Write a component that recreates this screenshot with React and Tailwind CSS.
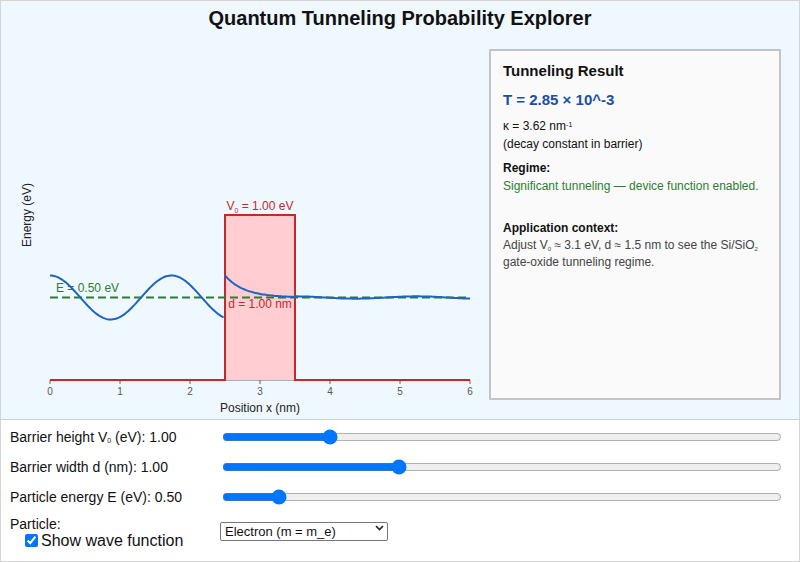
import { useState } from "react";

// physics constants in nm^-1 for E, V in eV (electron)
const K0 = 5.123;

function wavePath(E, V0, d, a, show) {
  const k = K0 * Math.sqrt(E);
  const kappa = K0 * Math.sqrt(Math.max(V0 - E, 0.0001));
  const T = 2.85e-3;
  const px = (x) => 50 + x * 70;
  const yE = 380 - E * 165;
  const amp = 22;
  const pts = [];
  const b = a + d;
  for (let x = 0; x <= 6.0001; x += 0.02) {
    let y;
    if (x < a) y = yE - amp * Math.cos(k * x);
    else if (x <= b) y = yE - amp * Math.exp(-kappa * (x - a));
    else y = yE - amp * Math.sqrt(T) * Math.cos(k * (x - b));
    pts.push([px(x), y]);
  }
  // break at the barrier edge like the original plot
  let dStr = "";
  let prevRegion = null;
  for (const [i, [x, y]] of pts.entries()) {
    const xn = (x - 50) / 70;
    const region = xn < a ? 0 : xn <= b ? 1 : 2;
    const cmd = i === 0 || (region === 1 && prevRegion === 0) ? "M" : "L";
    dStr += `${cmd}${x.toFixed(1)},${y.toFixed(1)} `;
    prevRegion = region;
  }
  return show ? dStr : "";
}

function Chart({ V0, d, E, show }) {
  const a = 2.5;
  const x0 = 50 + a * 70;
  const x1 = 50 + (a + d) * 70;
  const yTop = 380 - V0 * 165;
  const yE = 380 - E * 165;
  return (
    <svg width="480" height="382" viewBox="1 37 480 382" className="block shrink-0">
      <text x="28" y="215" transform="rotate(-90 28 215)" textAnchor="middle" dominantBaseline="middle" fontSize="12" fill="#222">
        Energy (eV)
      </text>
      <line x1="50" y1="380" x2="470" y2="380" stroke="#666" strokeWidth="1" />
      {[0, 1, 2, 3, 4, 5, 6].map((t) => (
        <g key={t}>
          <line x1={50 + t * 70} y1="380" x2={50 + t * 70} y2="384" stroke="#666" strokeWidth="1" />
          <text x={50 + t * 70} y="394.5" textAnchor="middle" fontSize="10" fill="#555">
            {t}
          </text>
        </g>
      ))}
      <text x="260" y="411.5" textAnchor="middle" fontSize="12" fill="#222">
        Position x (nm)
      </text>
      <rect x={x0} y={yTop} width={x1 - x0} height={380 - yTop} fill="#ffcdd2" />
      <polyline
        points={`50,380 ${x0},380 ${x0},${yTop} ${x1},${yTop} ${x1},380 470,380`}
        fill="none"
        stroke="#c62828"
        strokeWidth="2"
      />
      <text x={(x0 + x1) / 2} y={yTop - 5} textAnchor="middle" fontSize="12" fill="#c62828">
        V<tspan fontSize="7" dy="3">0</tspan>
        <tspan dy="-3"> = {V0.toFixed(2)} eV</tspan>
      </text>
      <text x={(x0 + x1) / 2} y={yE + 10} textAnchor="middle" fontSize="12" fill="#c62828">
        d = {d.toFixed(2)} nm
      </text>
      <line x1="50" y1={yE} x2="470" y2={yE} stroke="#2e7d32" strokeWidth="2" strokeDasharray="8 4" />
      <text x="56" y={yE - 6} fontSize="12" fill="#2e7d32">
        E = {E.toFixed(2)} eV
      </text>
      <path d={wavePath(E, V0, d, a, show)} fill="none" stroke="#1e64c0" strokeWidth="2" />
    </svg>
  );
}

function ResultBox() {
  return (
    <div className="mt-3 ml-2 w-[292px] h-[351px] border-2 border-[#c4c4c4] bg-[#fafafa] px-3 pt-[11px] text-[12px] text-[#111]">
      <div className="text-[15px] leading-[18px] font-bold">Tunneling Result</div>
      <div className="mt-[10px] text-[15px] leading-[20px] font-bold text-[#1a4fa6]">T = 2.85 × 10^-3</div>
      <div className="mt-[7px] leading-[18px]">
        κ = 3.62 nm<sup className="text-[7px]">-1</sup>
      </div>
      <div className="leading-[18px]">(decay constant in barrier)</div>
      <div className="mt-[6px] leading-[18px] font-bold">Regime:</div>
      <div className="leading-[18px] text-[#2e7d32]">Significant tunneling — device function enabled.</div>
      <div className="mt-[24px] leading-[18px] font-bold">Application context:</div>
      <div className="leading-[17px] text-[#444]">
        Adjust V<sub className="text-[6px]">0</sub> ≈ 3.1 eV, d ≈ 1.5 nm to see the Si/SiO<sub className="text-[6px]">2</sub> gate-oxide tunneling regime.
      </div>
    </div>
  );
}

function SliderRow({ label, value, min, max, step, onChange }) {
  return (
    <>
      <div className="h-5 flex items-center text-[14px] text-[#111]">{label}</div>
      <div className="h-5 flex items-center">
        <input
          type="range"
          min={min}
          max={max}
          step={step}
          value={value}
          onChange={(e) => onChange(parseFloat(e.target.value))}
          className="w-full mx-[2px] accent-[#0075ff]"
        />
      </div>
    </>
  );
}

export default function App() {
  const [V0, setV0] = useState(1.0);
  const [d, setD] = useState(1.0);
  const [E, setE] = useState(0.5);
  const [particle, setParticle] = useState("electron");
  const [show, setShow] = useState(true);

  return (
    <div className="w-[800px] h-[562px] border border-[#d4d4d4] font-['Liberation_Sans',Arial,sans-serif] flex flex-col">
      <div className="h-[418px] bg-[#eff7ff] flex flex-col">
        <h1 className="h-9 pt-[5px] text-center text-[20px] leading-[24px] font-bold text-[#111]">
          Quantum Tunneling Probability Explorer
        </h1>
        <div className="flex">
          <Chart V0={V0} d={d} E={E} show={show} />
          <ResultBox />
        </div>
      </div>
      <div className="flex-1 bg-white border-t border-[#cfcfcf] pl-[9px] pr-[15px] pt-[7px]">
        <div className="grid grid-cols-[210px_1fr] gap-y-[10px]">
          <SliderRow
            label={<span>Barrier height V<sub className="text-[7px]">0</sub> (eV): {V0.toFixed(2)}</span>}
            value={V0}
            min={0.1}
            max={5}
            step={0.01}
            onChange={setV0}
          />
          <SliderRow label={`Barrier width d (nm): ${d.toFixed(2)}`} value={d} min={0.1} max={3} step={0.01} onChange={setD} />
          <SliderRow label={`Particle energy E (eV): ${E.toFixed(2)}`} value={E} min={0.05} max={5} step={0.01} onChange={setE} />
          <div className="flex flex-col">
            <div className="text-[14px] leading-[15px] text-[#111]">Particle:</div>
            <label className="flex items-center ml-[15px] text-[16px] leading-[17px] text-[#111]">
              <input
                type="checkbox"
                checked={show}
                onChange={(e) => setShow(e.target.checked)}
                className="w-[13px] h-[13px] mr-[3px] accent-[#0075ff]"
              />
              Show wave function
            </label>
          </div>
          <div className="relative w-[168px] h-[19px] mt-[2px]">
            <select
              value={particle}
              onChange={(e) => setParticle(e.target.value)}
              className="appearance-none w-full h-full border border-[#767676] rounded-[2px] bg-white pl-[4px] text-[13px] leading-[17px] text-[#111]"
            >
              <option value="electron">Electron (m = m_e)</option>
              <option value="muon">Muon (m = 207 m_e)</option>
              <option value="proton">Proton (m = 1836 m_e)</option>
            </select>
            <svg className="absolute right-[4px] top-[6px] pointer-events-none" width="9" height="6" viewBox="0 0 9 6">
              <path d="M1 1 L4.5 4.5 L8 1" fill="none" stroke="#222" strokeWidth="1.6" />
            </svg>
          </div>
        </div>
      </div>
    </div>
  );
}
